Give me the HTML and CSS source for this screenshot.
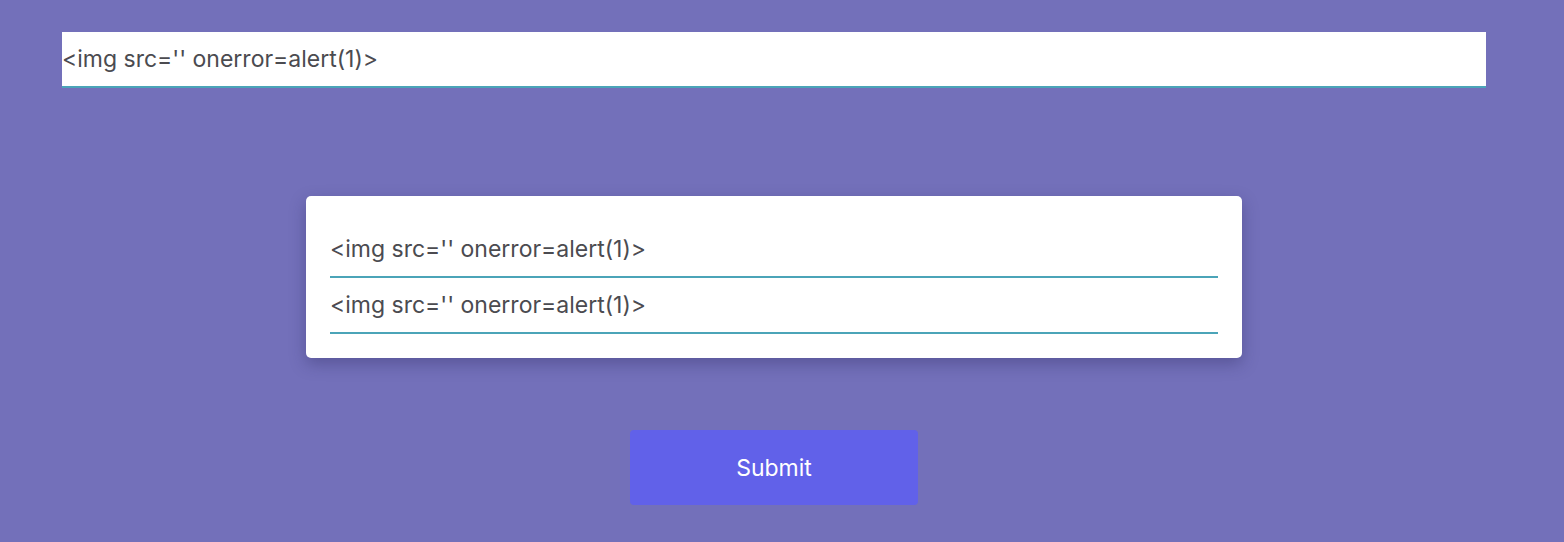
FILE: index.html
```html
<!DOCTYPE html>
<html>
<head>
<meta charset="utf-8">
<link rel="stylesheet" href="styles.css">
</head>
<body>
<div class="page">
  <div class="top-field"><input class="field top" type="text" value="<img src='' onerror=alert(1)>"></div>
  <div class="card">
    <input class="field" type="text" value="<img src='' onerror=alert(1)>">
    <input class="field" type="text" value="<img src='' onerror=alert(1)>">
  </div>
  <button class="submit" type="button">Submit</button>
</div>
</body>
</html>
```
FILE: styles.css
```css
html, body {
  margin: 0;
  padding: 0;
  background: #7370ba;
  height: 100%;
}
.page {
  width: 1548px;
  display: flex;
  flex-direction: column;
  align-items: center;
  padding-top: 32px;
  font-family: Inter, "Noto Sans", sans-serif;
}
.top-field {
  align-self: stretch;
  margin: 0 62px;
  background: #fff;
}
.field {
  display: block;
  width: 100%;
  box-sizing: border-box;
  border: none;
  border-bottom: 2px solid #4ba4b8;
  outline: none;
  background: transparent;
  font-family: inherit;
  font-size: 23px;
  color: #4b4b50;
  padding: 0;
  height: 56px;
}
.card {
  margin-top: 108px;
  width: 936px;
  box-sizing: border-box;
  background: #fff;
  border-radius: 5px;
  padding: 26px 24px 24px;
  box-shadow: 0 6px 16px rgba(40, 38, 90, 0.35);
}
.card .field {
  height: 56px;
}
.submit {
  margin-top: 72px;
  width: 288px;
  height: 75px;
  border: none;
  border-radius: 4px;
  background: #6161e9;
  color: #fff;
  font-family: inherit;
  font-size: 23px;
  cursor: pointer;
}
```
